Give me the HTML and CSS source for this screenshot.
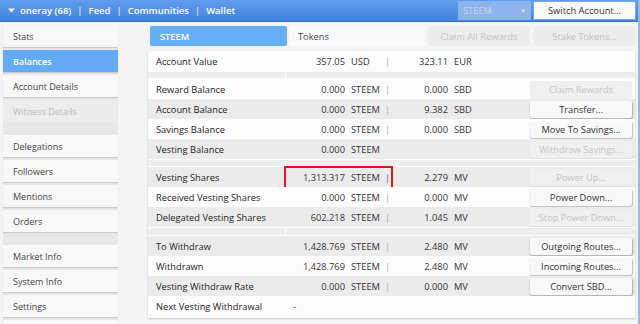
FILE: index.html
```html
<!DOCTYPE html>
<html>
<head>
<meta charset="utf-8">
<title>Wallet</title>
<link rel="stylesheet" href="styles.css">
</head>
<body>
<header class="topbar">
  <nav class="crumbs">
    <svg class="caret" width="7" height="5" viewBox="0 0 7 5"><path d="M0 0.5h7L3.5 4.5z" fill="#fff"/></svg>
    <span class="crumb">oneray (68)</span><span class="pipe">|</span>
    <span class="crumb">Feed</span><span class="pipe">|</span>
    <span class="crumb">Communities</span><span class="pipe">|</span>
    <span class="crumb">Wallet</span>
  </nav>
  <div class="top-actions">
    <div class="select"><span>STEEM</span><span class="select-arrow">▾</span></div>
    <button class="switch">Switch Account...</button>
  </div>
</header>

<div class="main">
  <aside class="sidebar">
    <div class="group">
      <div class="side-item">Stats</div>
      <div class="side-item active">Balances</div>
      <div class="side-item">Account Details</div>
      <div class="side-item disabled">Witness Details</div>
    </div>
    <div class="group">
      <div class="side-item">Delegations</div>
      <div class="side-item">Followers</div>
      <div class="side-item">Mentions</div>
      <div class="side-item">Orders</div>
    </div>
    <div class="group">
      <div class="side-item">Market Info</div>
      <div class="side-item">System Info</div>
      <div class="side-item">Settings</div>
      <div class="side-item"></div>
    </div>
  </aside>

  <section class="content">
    <div class="tabs">
      <div class="tab tab-active">STEEM</div>
      <div class="tab tab-plain">Tokens</div>
      <div class="tab tab-disabled claim">Claim All Rewards</div>
      <div class="tab tab-disabled stake">Stake Tokens...</div>
    </div>

    <div class="panel">
      <div class="row light">
        <div class="label">Account Value</div><div class="val">357.05</div><div class="unit">USD</div><div class="bar">|</div><div class="val2">323.11</div><div class="unit2">EUR</div><div class="act"></div>
      </div>
      <div class="sep"><div class="sep-l"></div><div class="sep-r"></div></div>

      <div class="row light">
        <div class="label">Reward Balance</div><div class="val">0.000</div><div class="unit">STEEM</div><div class="bar">|</div><div class="val2">0.000</div><div class="unit2">SBD</div><div class="act"><button class="btn off">Claim Rewards</button></div>
      </div>
      <div class="row dark">
        <div class="label">Account Balance</div><div class="val">0.000</div><div class="unit">STEEM</div><div class="bar">|</div><div class="val2">9.382</div><div class="unit2">SBD</div><div class="act"><button class="btn">Transfer...</button></div>
      </div>
      <div class="row light">
        <div class="label">Savings Balance</div><div class="val">0.000</div><div class="unit">STEEM</div><div class="bar">|</div><div class="val2">0.000</div><div class="unit2">SBD</div><div class="act"><button class="btn">Move To Savings...</button></div>
      </div>
      <div class="row dark">
        <div class="label">Vesting Balance</div><div class="val">0.000</div><div class="unit">STEEM</div><div class="bar"></div><div class="val2"></div><div class="unit2"></div><div class="act"><button class="btn off">Withdraw Savings...</button></div>
      </div>
      <div class="sep"><div class="sep-l"></div><div class="sep-r"></div></div>

      <div class="row dark marked">
        <div class="label">Vesting Shares</div><div class="val">1,313.317</div><div class="unit">STEEM</div><div class="bar strong">|</div><div class="val2">2.279</div><div class="unit2">MV</div><div class="act"><button class="btn off">Power Up...</button></div>
      </div>
      <div class="row light">
        <div class="label">Received Vesting Shares</div><div class="val">0.000</div><div class="unit">STEEM</div><div class="bar">|</div><div class="val2">0.000</div><div class="unit2">MV</div><div class="act"><button class="btn">Power Down...</button></div>
      </div>
      <div class="row dark">
        <div class="label">Delegated Vesting Shares</div><div class="val">602.218</div><div class="unit">STEEM</div><div class="bar">|</div><div class="val2">1.045</div><div class="unit2">MV</div><div class="act"><button class="btn off">Stop Power Down...</button></div>
      </div>
      <div class="sep sep-tall"><div class="sep-l"></div><div class="sep-r"></div></div>

      <div class="row dark">
        <div class="label">To Withdraw</div><div class="val">1,428.769</div><div class="unit">STEEM</div><div class="bar">|</div><div class="val2">2.480</div><div class="unit2">MV</div><div class="act"><button class="btn">Outgoing Routes...</button></div>
      </div>
      <div class="row light">
        <div class="label">Withdrawn</div><div class="val">1,428.769</div><div class="unit">STEEM</div><div class="bar">|</div><div class="val2">2.480</div><div class="unit2">MV</div><div class="act"><button class="btn">Incoming Routes...</button></div>
      </div>
      <div class="row dark">
        <div class="label">Vesting Withdraw Rate</div><div class="val">0.000</div><div class="unit">STEEM</div><div class="bar">|</div><div class="val2">0.000</div><div class="unit2">MV</div><div class="act"><button class="btn">Convert SBD...</button></div>
      </div>
      <div class="row light">
        <div class="label">Next Vesting Withdrawal</div><div class="val dash">-</div><div class="unit"></div><div class="bar"></div><div class="val2"></div><div class="unit2"></div><div class="act"></div>
      </div>
    </div>
  </section>
</div>
</body>
</html>
```

FILE: styles.css
```css
* { box-sizing: border-box; }

html, body {
  margin: 0;
  padding: 0;
}

body {
  width: 640px;
  height: 324px;
  overflow: hidden;
  background: #f4f4f4;
  font-family: "Open Sans", "DejaVu Sans", sans-serif;
  font-size: 9.3px;
  color: #333;
  border-right: 2px solid #9fb6d6;
}

/* ---------- top bar ---------- */
.topbar {
  height: 22px;
  display: flex;
  align-items: center;
  justify-content: space-between;
  background: linear-gradient(#5f9eec, #4184dd);
  border-bottom: 1px solid #3a74c6;
  padding: 0 2px 0 8px;
}

.crumbs {
  display: flex;
  align-items: center;
  color: #fff;
  font-weight: 600;
  font-size: 9.5px;
}

.caret { margin-right: 5px; }

.pipe { margin: 0 6px; font-weight: 400; }

.top-actions {
  display: flex;
  align-items: center;
  gap: 2px;
  height: 19px;
}

.select {
  width: 73px;
  height: 19px;
  display: flex;
  align-items: center;
  justify-content: space-between;
  padding: 0 6px 0 5px;
  background: #8db4ec;
  color: #c4d6f2;
  font-size: 9.3px;
}

.select-arrow { font-size: 7px; color: #d7e3f5; }

.switch {
  width: 103px;
  height: 19px;
  margin: 0;
  padding: 0;
  border: 1px solid #7ba8e6;
  background: #fafafa;
  color: #333;
  font-family: inherit;
  font-size: 9.3px;
}

/* ---------- layout ---------- */
.main {
  display: flex;
  align-items: flex-start;
  padding-top: 3px;
}

.sidebar {
  width: 118px;
  padding-left: 3px;
  display: flex;
  flex-direction: column;
  gap: 13px;
  background: linear-gradient(to right, #f4f4f4 3px, #e8e8e8 3px);
}

.group {
  display: flex;
  flex-direction: column;
  gap: 3px;
  background: #e8e8e8;
}

.side-item {
  height: 22px;
  display: flex;
  align-items: center;
  padding-left: 10px;
  background: #f8f8f8;
  box-shadow: 0 1px 1px rgba(0,0,0,0.12);
  color: #444;
  font-size: 9px;
}

.side-item.active {
  background: #63acf5;
  color: #fff;
  font-weight: 600;
}

.side-item.disabled {
  background: #ececec;
  color: #bcbcbc;
  box-shadow: none;
}

.content {
  margin-left: 30px;
  width: 488px;
  padding-top: 1px;
}

/* ---------- tabs ---------- */
.tabs {
  display: flex;
  height: 20px;
  padding-left: 2px;
}

.tab {
  height: 20px;
  display: flex;
  align-items: center;
  border-radius: 2px;
}

.tab-active {
  width: 137px;
  padding-left: 10px;
  background: #66aff7;
  color: #fff;
  font-weight: 600;
}

.tab-plain {
  width: 136px;
  margin-left: 2px;
  padding-left: 9px;
  background: #fafafa;
  color: #444;
}

.tab-disabled {
  justify-content: center;
  background: #ededed;
  color: #c2c2c2;
  margin-left: 3px;
}

.claim { width: 102px; }
.stake { width: 103px; }

/* ---------- table panel ---------- */
.panel {
  margin-top: 5px;
  width: 487px;
  background: #fdfdfd;
  padding-bottom: 2px;
  box-shadow: 0 1px 2px rgba(0,0,0,0.18);
}

.row {
  position: relative;
  height: 20px;
  display: grid;
  grid-template-columns: 137px 62px 36px 9px 58px 1fr 107px;
  align-items: center;
}

.row.light { background: #fdfdfd; }
.row.dark { background: #ebebeb; }

.label { padding-left: 8px; color: #222; white-space: nowrap; }

.val, .val2 { text-align: right; padding-right: 2px; white-space: nowrap; }

.unit, .unit2 { padding-left: 4px; white-space: nowrap; }

.bar { text-align: center; color: #a8a8a8; }
.bar.strong { color: #8a8a8a; font-weight: 600; }

.val.dash { text-align: left; padding-left: 8px; }

.act { display: flex; justify-content: flex-start; padding-left: 2px; }

.btn {
  width: 102px;
  height: 17px;
  margin: 0;
  padding: 0;
  border: none;
  border-radius: 2px;
  background: #f8f8f8;
  box-shadow: 0.5px 1px 1.5px rgba(0,0,0,0.28);
  font-family: inherit;
  font-size: 9.3px;
  color: #333;
}

.btn.off {
  background: #efefef;
  color: #c6c6c6;
  box-shadow: 0 1px 1px rgba(0,0,0,0.06);
}

.sep {
  height: 8px;
  display: flex;
  background: #fdfdfd;
  padding: 1px 0;
}

.sep-tall { height: 9px; }

.sep-l { width: 137px; background: #ededed; }
.sep-r { flex: 1; margin-left: 1px; background: #ededed; }

.marked::after {
  content: "";
  position: absolute;
  left: 136px;
  top: -1px;
  width: 105px;
  height: 20px;
  border: 2px solid #e0171f;
}
```
